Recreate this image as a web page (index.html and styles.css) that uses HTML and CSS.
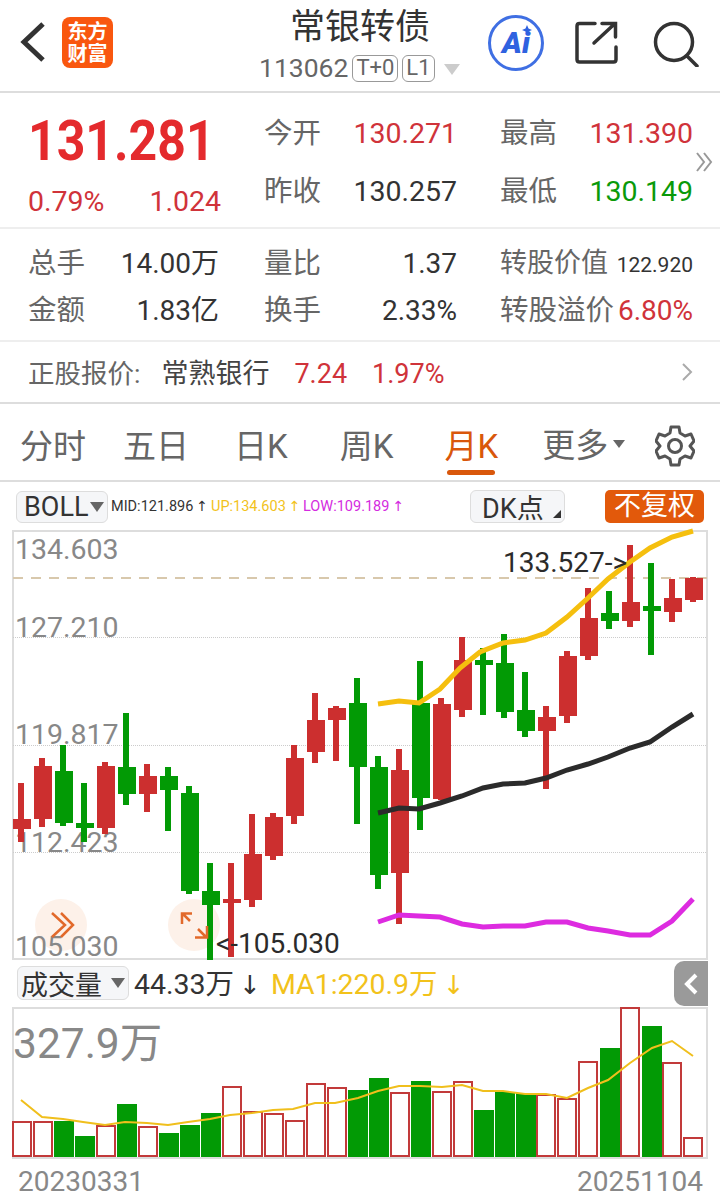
FILE: index.html
```html
<!DOCTYPE html>
<html lang="zh-CN">
<head>
<meta charset="utf-8">
<title>常银转债</title>
<meta name="viewport" content="width=device-width,initial-scale=1">
<link rel="stylesheet" href="styles.css">
</head>
<body>

<!-- 顶栏 -->
<header class="topbar">
  <svg class="ico-back" width="30" height="44" viewBox="0 0 30 44"><path d="M26 4 L7 22 L26 40"/></svg>
  <div class="logo">东方<br>财富</div>
  <div class="title">
    <div class="name">常银转债</div>
    <div class="code">113062<span class="tag">T+0</span><span class="tag">L1</span><i class="tri"></i></div>
  </div>
  <div class="ai">Ai<svg class="ai-star" width="10" height="10" viewBox="0 0 10 10"><path d="M5 0 L6.500 3.500 L10 5 L6.500 6.500 L5 10 L3.500 6.500 L0 5 L3.500 3.500Z"/></svg></div>
  <svg class="ico-share" width="44" height="44" viewBox="0 0 44 44"><path d="M21 3.500 H5.500 Q3 3.500 3 6 V39.500 Q3 42 5.500 42 H39.500 Q42 42 42 39.500 V27"/><path d="M20 23 L41 3.500 M28 3.500 H41.500 V17"/></svg>
  <svg class="ico-search" width="46" height="46" viewBox="0 0 46 46"><circle cx="21" cy="21" r="18.500"/><path d="M34 35 L44 45"/></svg>
</header>

<!-- 报价 -->
<section class="quote">
  <div class="price-box">
    <div class="price">131.281</div>
    <div class="change"><span>0.79%</span><span>1.024</span></div>
  </div>
  <div class="kv"><span class="k">今开</span><span class="red">130.271</span></div>
  <div class="kv"><span class="k">最高</span><span class="red">131.390</span></div>
  <div class="kv"><span class="k">昨收</span><span>130.257</span></div>
  <div class="kv"><span class="k">最低</span><span class="green">130.149</span></div>
  <svg class="more-quote" width="18" height="22" viewBox="0 0 18 22"><path d="M2 2 L9 11 L2 20 M9 2 L16 11 L9 20"/></svg>
</section>

<section class="stats">
  <div class="kv"><span class="k">总手</span><span>14.00万</span></div>
  <div class="kv"><span class="k">量比</span><span>1.37</span></div>
  <div class="kv"><span class="k k-fit">转股价值</span><span class="small">122.920</span></div>
  <div class="kv"><span class="k">金额</span><span>1.83亿</span></div>
  <div class="kv"><span class="k">换手</span><span>2.33%</span></div>
  <div class="kv"><span class="k">转股溢价</span><span class="red">6.80%</span></div>
</section>

<section class="stock">
  <span class="k">正股报价:</span>
  <span class="stock-name">常熟银行</span>
  <span class="red stock-price">7.24</span>
  <span class="red">1.97%</span>
  <svg class="stock-arrow" width="12" height="20" viewBox="0 0 12 20"><path d="M2 2 L10 10 L2 18"/></svg>
</section>

<!-- 周期 -->
<nav class="tabs">
  <a>分时</a>
  <a>五日</a>
  <a>日K</a>
  <a>周K</a>
  <a class="on">月K</a>
  <a class="tab-more">更多<i class="tri-small"></i></a>
  <svg class="ico-gear" width="40" height="42" viewBox="0 0 40 42"><path d="M16 2 H24 L25 8 L30 11 L36 9 L39 16 L35 21 L39 26 L36 33 L30 31 L25 34 L24 40 H16 L15 34 L10 31 L4 33 L1 26 L5 21 L1 16 L4 9 L10 11 L15 8Z"/><circle cx="20" cy="21" r="6.500"/></svg>
</nav>

<div class="toolbar">
  <div class="sel sel-boll">BOLL<i class="tri-down"></i></div>
  <div class="legend">
    <span class="c-mid">MID:121.896<b>↑</b></span>
    <span class="c-up">UP:134.603<b>↑</b></span>
    <span class="c-low">LOW:109.189<b>↑</b></span>
  </div>
  <div class="sel sel-dk">DK点<i class="tri-corner"></i></div>
  <div class="fq">不复权</div>
</div>

<!-- K线 -->
<svg class="chart" width="720" height="430" viewBox="0 530 720 430">
  <rect class="frame" x="13" y="531" width="694" height="428"/>
  <path class="grid" d="M13 637.500 H707 M13 745.500 H707 M13 852.500 H707"/>
  <path class="dash" d="M13 578 H707"/>
  <circle class="float" cx="61" cy="925" r="26"/>
  <circle class="float" cx="194" cy="925" r="26"/>
  <text class="axis" x="15" y="559">134.603</text>
  <text class="axis" x="15" y="637">127.210</text>
  <text class="axis" x="15" y="744">119.817</text>
  <text class="axis" x="15" y="852">112.423</text>
  <text class="axis" x="15" y="956">105.030</text>

  <g class="rise">
    <rect x="18" y="783" width="6" height="59"/><rect x="13" y="819" width="18" height="10"/>
    <rect x="39" y="758" width="6" height="69"/><rect x="34" y="766" width="18" height="53"/>
    <rect x="102" y="762" width="6" height="72"/><rect x="97" y="766" width="18" height="62"/>
    <rect x="144" y="764" width="6" height="48"/><rect x="139" y="776" width="18" height="18"/>
    <rect x="228" y="863" width="6" height="94"/><rect x="223" y="899" width="18" height="4"/>
    <rect x="249" y="814" width="6" height="93"/><rect x="244" y="854" width="18" height="46"/>
    <rect x="270" y="813" width="6" height="47"/><rect x="265" y="817" width="18" height="39"/>
    <rect x="291" y="745" width="6" height="79"/><rect x="286" y="758" width="18" height="58"/>
    <rect x="312" y="693" width="6" height="70"/><rect x="307" y="720" width="18" height="32"/>
    <rect x="333" y="706" width="6" height="55"/><rect x="328" y="708" width="18" height="12"/>
    <rect x="396" y="749" width="6" height="175"/><rect x="391" y="770" width="18" height="103"/>
    <rect x="438" y="698" width="6" height="102"/><rect x="433" y="704" width="18" height="95"/>
    <rect x="459" y="637" width="6" height="80"/><rect x="454" y="660" width="18" height="50"/>
    <rect x="543" y="706" width="6" height="83"/><rect x="538" y="717" width="18" height="14"/>
    <rect x="564" y="651" width="6" height="72"/><rect x="559" y="656" width="18" height="60"/>
    <rect x="585" y="588" width="6" height="72"/><rect x="580" y="618" width="18" height="38"/>
    <rect x="627" y="545" width="6" height="82"/><rect x="622" y="602" width="18" height="19"/>
    <rect x="669" y="579" width="6" height="43"/><rect x="664" y="598" width="18" height="14"/>
    <rect x="690" y="577" width="6" height="25"/><rect x="685" y="578" width="18" height="22"/>
  </g>
  <g class="fall">
    <rect x="60" y="745" width="6" height="81"/><rect x="55" y="771" width="18" height="52"/>
    <rect x="81" y="783" width="6" height="59"/><rect x="76" y="823" width="18" height="5"/>
    <rect x="123" y="713" width="6" height="92"/><rect x="118" y="767" width="18" height="27"/>
    <rect x="165" y="767" width="6" height="64"/><rect x="160" y="776" width="18" height="14"/>
    <rect x="186" y="786" width="6" height="108"/><rect x="181" y="793" width="18" height="98"/>
    <rect x="207" y="863" width="6" height="97"/><rect x="202" y="891" width="18" height="14"/>
    <rect x="354" y="678" width="6" height="146"/><rect x="349" y="703" width="18" height="64"/>
    <rect x="375" y="756" width="6" height="133"/><rect x="370" y="767" width="18" height="108"/>
    <rect x="417" y="661" width="6" height="169"/><rect x="412" y="703" width="18" height="95"/>
    <rect x="480" y="648" width="6" height="67"/><rect x="475" y="660" width="18" height="5"/>
    <rect x="501" y="634" width="6" height="84"/><rect x="496" y="663" width="18" height="49"/>
    <rect x="522" y="672" width="6" height="65"/><rect x="517" y="710" width="18" height="21"/>
    <rect x="606" y="591" width="6" height="38"/><rect x="601" y="613" width="18" height="8"/>
    <rect x="648" y="563" width="6" height="92"/><rect x="643" y="606" width="18" height="5"/>
  </g>

  <polyline class="ln ln-up" points="378,704 399,701 419,703 440,689 460,668 480,652 503,643 525,640 546,633 567,617 588,598 608,579 630,562 650,548 672,537 693,531"/>
  <polyline class="ln ln-mid" points="378,813 399,808 419,809 440,803 462,796 483,788 503,784 525,783 546,778 567,770 588,764 608,757 630,748 650,742 672,727 693,714"/>
  <polyline class="ln ln-low" points="378,922 399,915 419,916 440,917 462,924 483,927 503,926 525,926 546,922 567,922 588,928 608,931 630,935 650,935 672,921 693,899"/>

  <text class="mark" x="503" y="572">133.527-&gt;</text>
  <text class="mark" x="216" y="953">&lt;-105.030</text>

  <path class="float-ico" d="M52 913 L65 925 L52 937 M61 913 L73 925 L61 937"/>
  <path class="float-ico" d="M183 914 L190 921 M182 924 V913.500 H192 M198 929 L206 937 M195 937.500 H207 V926"/>
</svg>

<!-- 成交量 -->
<div class="vol-bar">
  <div class="sel sel-vol">成交量<i class="tri-down"></i></div>
  <span class="vol-now">44.33万<b>↓</b></span>
  <span class="vol-ma">MA1:220.9万<b>↓</b></span>
  <div class="side-tab"><svg width="16" height="24" viewBox="0 0 16 24"><path d="M13 3 L4 12 L13 21"/></svg></div>
</div>

<svg class="chart chart-vol" width="720" height="151" viewBox="0 1007 720 151">
  <rect class="frame" x="13" y="1008" width="694" height="150"/>
  <g class="fall">
    <rect x="54" y="1121" width="20" height="36"/>
    <rect x="75" y="1136" width="20" height="21"/>
    <rect x="117" y="1104" width="20" height="53"/>
    <rect x="159" y="1133" width="20" height="24"/>
    <rect x="180" y="1125" width="20" height="32"/>
    <rect x="201" y="1113" width="20" height="44"/>
    <rect x="348" y="1090" width="20" height="67"/>
    <rect x="369" y="1078" width="20" height="79"/>
    <rect x="411" y="1081" width="20" height="76"/>
    <rect x="474" y="1110" width="20" height="47"/>
    <rect x="495" y="1092" width="20" height="65"/>
    <rect x="516" y="1093" width="20" height="64"/>
    <rect x="600" y="1048" width="20" height="109"/>
    <rect x="642" y="1026" width="20" height="131"/>
  </g>
  <g class="hollow">
    <rect x="13" y="1122" width="18" height="34"/>
    <rect x="34" y="1122" width="18" height="34"/>
    <rect x="97" y="1126" width="18" height="30"/>
    <rect x="139" y="1127" width="18" height="29"/>
    <rect x="223" y="1087" width="18" height="69"/>
    <rect x="244" y="1112" width="18" height="44"/>
    <rect x="265" y="1114" width="18" height="42"/>
    <rect x="286" y="1121" width="18" height="35"/>
    <rect x="307" y="1084" width="18" height="72"/>
    <rect x="328" y="1088" width="18" height="68"/>
    <rect x="391" y="1093" width="18" height="63"/>
    <rect x="433" y="1092" width="18" height="64"/>
    <rect x="454" y="1082" width="18" height="74"/>
    <rect x="537" y="1095" width="18" height="61"/>
    <rect x="558" y="1099" width="18" height="57"/>
    <rect x="579" y="1062" width="18" height="94"/>
    <rect x="621" y="1008" width="18" height="148"/>
    <rect x="663" y="1063" width="18" height="93"/>
    <rect x="684" y="1138" width="18" height="18"/>
  </g>
  <polyline class="ma" points="21,1100 42,1117 63,1119 83,1122 105,1125 125,1122 147,1123 168,1125 188,1122 210,1119 230,1115 252,1113 273,1110 293,1109 315,1103 335,1103 358,1098 378,1091 399,1086 420,1086 442,1087 462,1085 483,1091 503,1091 525,1094 546,1094 567,1098 588,1088 608,1080 630,1063 652,1048 672,1041 693,1056"/>
  <text class="vol-max" x="13" y="1058">327.9万</text>
</svg>

<footer class="dates"><span>20230331</span><span>20251104</span></footer>

</body>
</html>
```

FILE: styles.css
```css
:root { --red:#d0333a; --green:#0a9a0a; --up:#cc2f2f; --down:#029a05; --orange:#e2590b; --line:#ddd;
        --sans:Roboto,"Noto Sans CJK SC",sans-serif }
* { box-sizing:border-box }
body { margin:0; width:720px; height:1200px; overflow:hidden; background:#fff; color:#333; font-family:var(--sans) }
svg { display:block; flex:none }
i { display:block }

/* 顶栏 */
.topbar { height:93px; display:flex; align-items:flex-start; border-bottom:2px solid var(--line); position:relative }
.ico-back { margin:20px 0 0 17px; fill:none; stroke:#333; stroke-width:5 }
.logo { width:51px; height:51px; margin:17px 0 0 15px; border-radius:8px; background:#f9570f; color:#fff; font-size:20px; font-weight:700; line-height:22px; text-align:center; padding-top:3px; font-family:"Noto Sans CJK SC",sans-serif }
.title { position:absolute; left:259px; top:7px; width:210px }
.name { font-size:35px; line-height:42px; padding-left:31px; color:#333 }
.code { display:flex; align-items:center; font-size:26.500px; line-height:38px; color:#666 }
.tag { margin-left:4px; height:27px; padding:0 3px; border:1.500px solid #999; border-radius:6px; font-size:22px; line-height:24px; color:#666 }
.tri { margin:2px 0 0 9px; border:8.500px solid transparent; border-top:11px solid #ccc; border-bottom:0 }
.ai { position:absolute; left:488px; top:15px; width:56px; height:56px; border:3px solid #3f6fe3; border-radius:50%; color:#2f62e0; font:italic 900 30px/49px Roboto,sans-serif; text-align:center }
.ai-star { position:absolute; left:31px; top:7px; fill:#2f62e0 }
.ico-share { position:absolute; left:574px; top:20px; fill:none; stroke:#333; stroke-width:3.500; stroke-linecap:round }
.ico-search { position:absolute; left:653px; top:21px; fill:none; stroke:#333; stroke-width:3.500; stroke-linecap:round }

/* 报价 */
.quote { height:136px; padding:12px 0 0 28px; display:grid; grid-template-columns:193px 234px 238px; grid-auto-rows:58px; border-bottom:2px solid #eee; position:relative }
.quote .kv:nth-child(odd) { margin-left:45px }
.quote .kv:nth-child(even) { margin:0 -2px 0 43px }
.price-box { grid-row:span 2; margin-top:-2px }
.price { font-size:50px; font-weight:700; line-height:54px; color:#e42a2d; margin-top:11px; transform:scaleY(1.1) }
.change { display:flex; justify-content:space-between; margin-top:16px; font-size:28.500px; line-height:36px; color:var(--red) }
.kv { display:flex; justify-content:space-between; align-items:baseline; align-self:center; line-height:34px; font-size:28.500px; color:#333 }
.k { color:#666; font-size:28.500px }
.red { color:var(--red) }
.green { color:var(--green) }
.more-quote { position:absolute; left:695px; top:58px; fill:none; stroke:#999; stroke-width:2 }
.stats { height:113px; padding:11px 0 0 28px; display:grid; grid-template-columns:236px 236px 193px; grid-auto-rows:47px; border-bottom:2px solid #eee }
.stats .kv { font-size:28px }
.stats .kv:nth-child(3n+1) { margin-right:45px }
.stats .kv:nth-child(3n+2) { margin-right:43px }
.stats .k-fit { font-size:27px }
.stats .small { font-size:21px }
.stock { height:62px; padding:0 27px 0 28px; display:flex; align-items:baseline; line-height:64px; font-size:27px; border-bottom:2px solid var(--line) }
.stock .k { font-size:26.500px }
.stock-name { margin-left:21px; color:#444 }
.stock-price { margin:0 25px }
.stock-arrow { margin-left:auto; align-self:center; fill:none; stroke:#aaa; stroke-width:2 }

/* 周期 */
.tabs { height:78px; position:relative; display:flex; border-bottom:2px solid var(--line); font-size:33px; color:#666; padding-left:20px }
.tabs a { display:block; line-height:86px; height:76px; position:relative; margin-right:37px }
.tabs a:nth-child(2) { margin-right:45px }
.tabs a:nth-child(3) { margin-right:52px }
.tabs a:nth-child(4) { margin-right:51px }
.tabs a:nth-child(5) { margin-right:44px }
.tabs .on { color:#d9570b }
.tabs .on::after { content:""; position:absolute; left:3px; right:3px; bottom:5px; height:5px; border-radius:3px; background:#d9570b }
.tab-more { display:flex !important; align-items:center; padding-top:8px }
.tri-small { margin:0 0 4px 5px; border:6px solid transparent; border-top:8px solid #666; border-bottom:0 }
.ico-gear { position:absolute; left:655px; top:21px; fill:none; stroke:#555; stroke-width:3; stroke-linejoin:round }

.toolbar { height:48px; display:flex; align-items:center; padding:1px 16px 0; position:relative }
.sel { display:flex; align-items:center; background:#f5f6f8; border:1px solid #ddd; border-radius:6px; font-size:27px; color:#333 }
.sel-boll { width:92px; height:32px; padding-left:7px }
.tri-down { margin-left:2px; border:7px solid transparent; border-top:10px solid #666; border-bottom:0 }
.legend { display:flex; margin-left:3px; font-size:14.500px; color:#333; white-space:nowrap }
.legend b { font-weight:400; margin-left:3px; font-family:"DejaVu Sans",sans-serif; font-size:14px }
.c-mid { width:100px }
.c-up { width:92px; color:#f2c21b }
.c-low { color:#d42be0 }
.sel-dk { position:absolute; left:470px; top:8px; width:95px; height:33px; padding-left:11px; font-size:27px }
.tri-corner { position:absolute; right:3px; bottom:4px; border-left:8px solid transparent; border-bottom:8px solid #333 }
.fq { position:absolute; left:605px; top:8px; width:99px; height:33px; background:var(--orange); border-radius:5px; color:#fff; font-size:27px; line-height:33px; text-align:center }

/* K线 */
.chart { overflow:visible }
.frame { fill:none; stroke:#ddd; stroke-width:2 }
.grid { stroke:#ccc; stroke-width:1; stroke-dasharray:1 1; fill:none }
.dash { stroke:#d8c8ac; stroke-width:2; stroke-dasharray:10 8; fill:none }
.float { fill:#fdf1e9 }
.float-ico { fill:none; stroke:#e2692a; stroke-width:2.500 }
.axis { font-size:28.500px; fill:#888 }
.mark { font-size:28px; fill:#2b2b2b }
.rise { fill:var(--up) }
.fall { fill:var(--down) }
.ln { fill:none; stroke-width:5 }
.ln-up { stroke:#f5bf0e }
.ln-mid { stroke:#2b2b2b }
.ln-low { stroke:#dd2be0 }

/* 成交量 */
.vol-bar { height:47px; display:flex; align-items:center; padding-left:17px; position:relative; font-size:28.500px; white-space:nowrap }
.sel-vol { width:112px; height:34px; padding-left:3px; font-size:27px; margin-bottom:1px }
.sel-vol .tri-down { margin-left:9px }
.vol-now { margin:0 0 4px 5px; color:#333 }
.vol-ma { margin:0 0 4px 10px; color:#f2c21b }
.vol-bar b { font-weight:400; margin-left:5px; font-family:"DejaVu Sans",sans-serif; font-size:26px }
.side-tab { position:absolute; left:674px; top:1px; width:34px; height:45px; background:#9a9a9a; border-radius:10px 0 0 10px; display:flex; align-items:center; justify-content:center }
.side-tab svg { fill:none; stroke:#fff; stroke-width:4 }
.hollow { fill:#fff; stroke:#c23a3a; stroke-width:2 }
.ma { fill:none; stroke:#f0bf1c; stroke-width:2 }
.vol-max { font-size:42.500px; fill:#888 }
.dates { display:flex; justify-content:space-between; padding:7px 17px 0 18px; font-size:28px; line-height:34px; color:#888 }
```
